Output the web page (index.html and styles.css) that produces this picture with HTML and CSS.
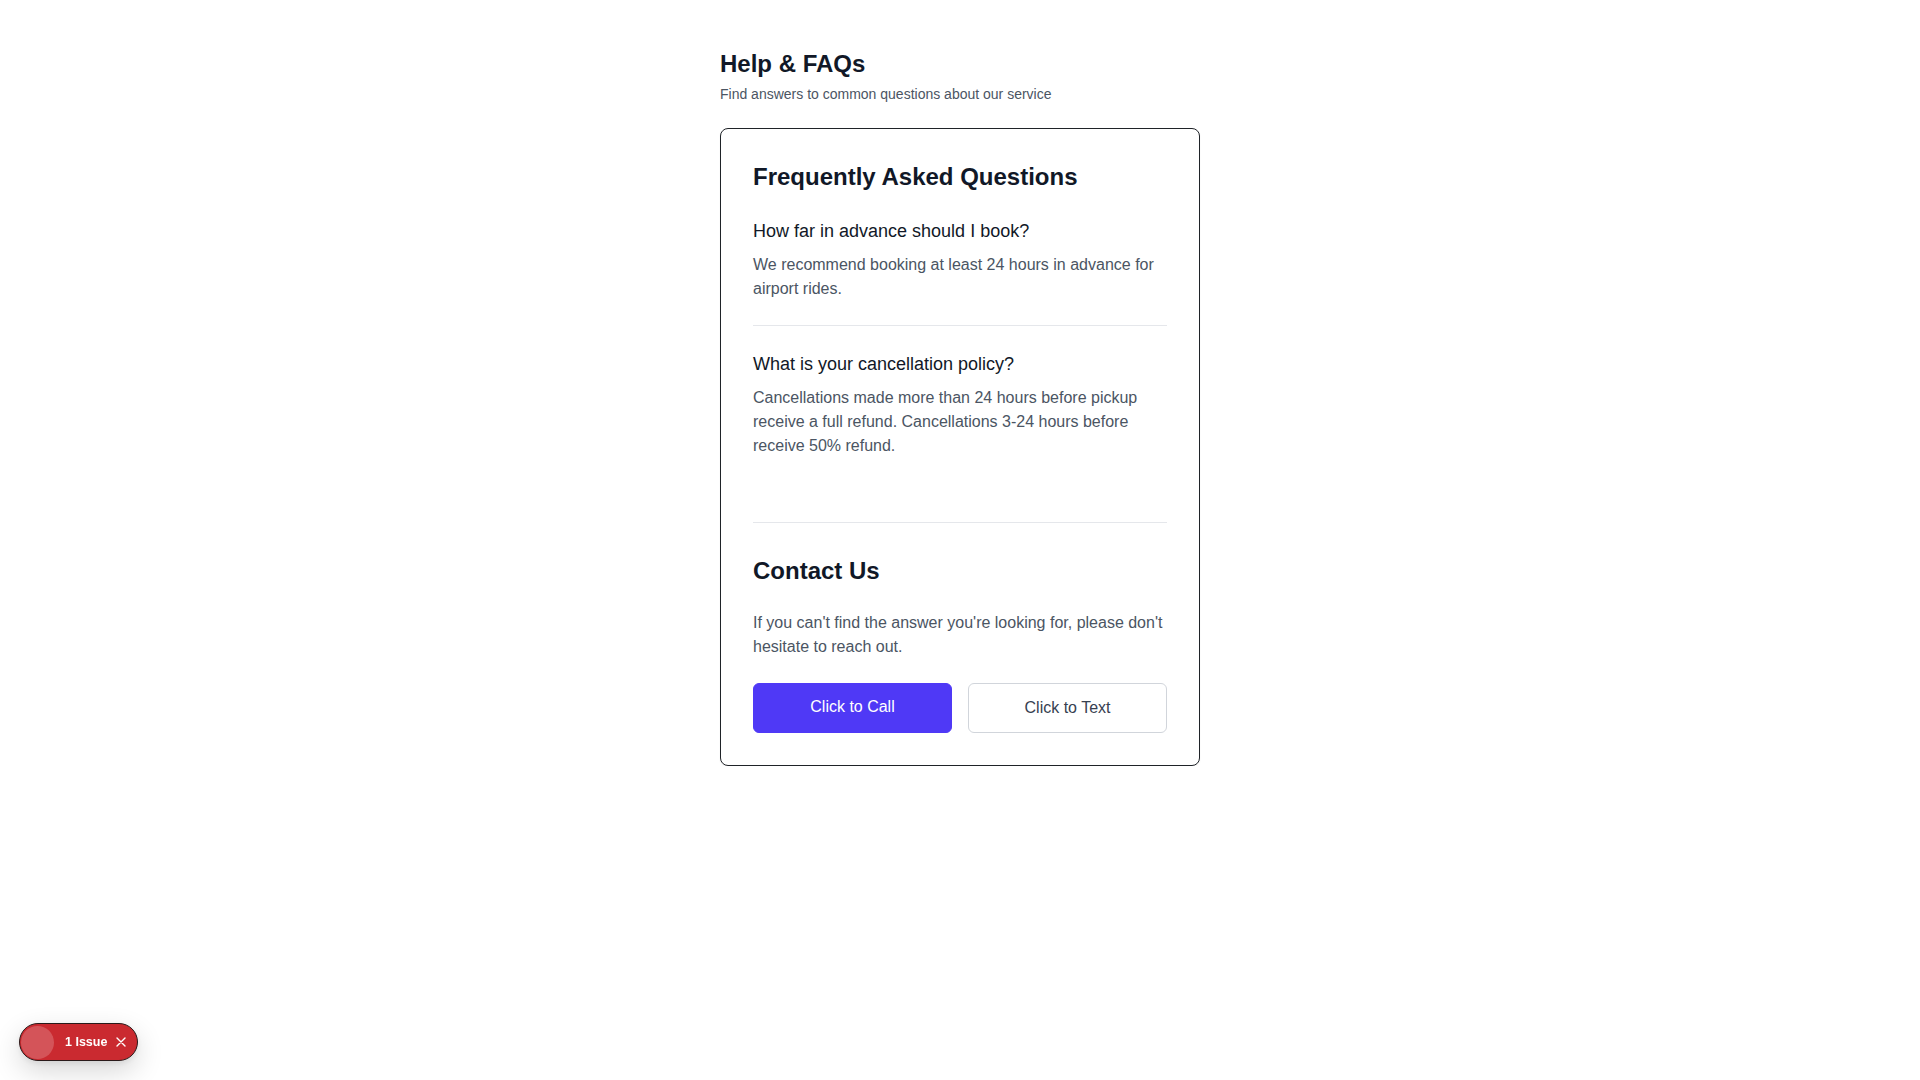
FILE: index.html
```html
<!DOCTYPE html>
<html lang="en">
<head>
<meta charset="utf-8">
<title>Help &amp; FAQs</title>
<link rel="stylesheet" href="styles.css">
</head>
<body>
<main class="page">
  <header class="page-header">
    <h1 class="page-title">Help &amp; FAQs</h1>
    <p class="page-subtitle">Find answers to common questions about our service</p>
  </header>

  <section class="card">
    <div class="faq">
      <h2 class="section-title">Frequently Asked Questions</h2>
      <div class="faq-list">
        <div class="faq-item">
          <h3 class="faq-q">How far in advance should I book?</h3>
          <p class="faq-a">We recommend booking at least 24 hours in advance for airport rides.</p>
        </div>
        <div class="faq-item faq-item-last">
          <h3 class="faq-q">What is your cancellation policy?</h3>
          <p class="faq-a">Cancellations made more than 24 hours before pickup receive a full refund. Cancellations 3-24 hours before receive 50% refund.</p>
        </div>
      </div>
    </div>

    <div class="contact">
      <h2 class="section-title">Contact Us</h2>
      <p class="contact-text">If you can't find the answer you're looking for, please don't hesitate to reach out.</p>
      <div class="actions">
        <button class="btn btn-primary" type="button">Click to Call</button>
        <button class="btn btn-outline" type="button">Click to Text</button>
      </div>
    </div>
  </section>
</main>

<div class="issue-badge">
  <span class="issue-dot"></span>
  <span class="issue-label">1 Issue</span>
  <svg class="issue-close" width="10" height="10" viewBox="0 0 10 10" aria-hidden="true">
    <path d="M1 1 L9 9 M9 1 L1 9" stroke="#ffffff" stroke-width="1.4" stroke-linecap="round" fill="none"/>
  </svg>
</div>
</body>
</html>
```

FILE: styles.css
```css
* {
  box-sizing: border-box;
}

html, body {
  margin: 0;
  padding: 0;
  background: #ffffff;
}

body {
  font-family: "Liberation Sans", Arial, Helvetica, sans-serif;
  color: #111827;
}

.page {
  max-width: 480px;
  margin: 0 auto;
  padding-top: 48px;
}

.page-header {
  margin-bottom: 24px;
}

.page-title {
  margin: 0;
  font-size: 24px;
  line-height: 32px;
  font-weight: 700;
  color: #111827;
}

.page-subtitle {
  margin: 4px 0 0;
  font-size: 14px;
  line-height: 20px;
  color: #4b5563;
}

.card {
  border: 1px solid #1f2328;
  border-radius: 8px;
  padding: 32px;
  background: #ffffff;
  box-shadow: 0 1px 2px rgba(0, 0, 0, 0.06);
}

.section-title {
  margin: 0 0 24px;
  font-size: 24px;
  line-height: 32px;
  font-weight: 700;
  color: #111827;
}

.faq {
  margin-bottom: 40px;
}

.faq-item {
  padding-bottom: 24px;
  border-bottom: 1px solid #e5e7eb;
}

.faq-item + .faq-item {
  padding-top: 24px;
}

.faq-item-last {
  border-bottom: none;
}

.faq-q {
  margin: 0 0 8px;
  font-size: 18px;
  line-height: 28px;
  font-weight: 500;
  color: #111827;
}

.faq-a {
  margin: 0;
  font-size: 16px;
  line-height: 24px;
  color: #4b5563;
}

.contact {
  border-top: 1px solid #e5e7eb;
  padding-top: 32px;
}

.contact-text {
  margin: 0 0 24px;
  font-size: 16px;
  line-height: 24px;
  color: #4b5563;
}

.actions {
  display: flex;
  gap: 16px;
}

.btn {
  flex: 1 1 0;
  height: 50px;
  padding: 12px 16px;
  font-family: inherit;
  font-size: 16px;
  line-height: 24px;
  border-radius: 6px;
  cursor: pointer;
}

.btn-primary {
  background: #4f39f6;
  color: #ffffff;
  border: 1px solid #4f39f6;
  padding-top: 11px;
  padding-bottom: 13px;
}

.btn-outline {
  background: #ffffff;
  color: #374151;
  border: 1px solid #d1d5db;
}

.issue-badge {
  position: fixed;
  left: 19px;
  bottom: 19px;
  width: 119px;
  height: 38px;
  display: flex;
  align-items: center;
  padding: 0 0 0 1px;
  background: #ca2a30;
  border: 1px solid #2a1a1a;
  border-radius: 19px;
  box-shadow: 0 10px 28px rgba(0, 0, 0, 0.16), 0 2px 6px rgba(0, 0, 0, 0.08);
  font-family: "Liberation Sans", Arial, sans-serif;
}

.issue-dot {
  width: 33px;
  height: 33px;
  border-radius: 50%;
  background: rgba(255, 255, 255, 0.2);
  flex: 0 0 auto;
}

.issue-label {
  margin-left: 11px;
  font-size: 12.5px;
  font-weight: 700;
  color: #ffffff;
}

.issue-close {
  margin-left: 9px;
}
```
